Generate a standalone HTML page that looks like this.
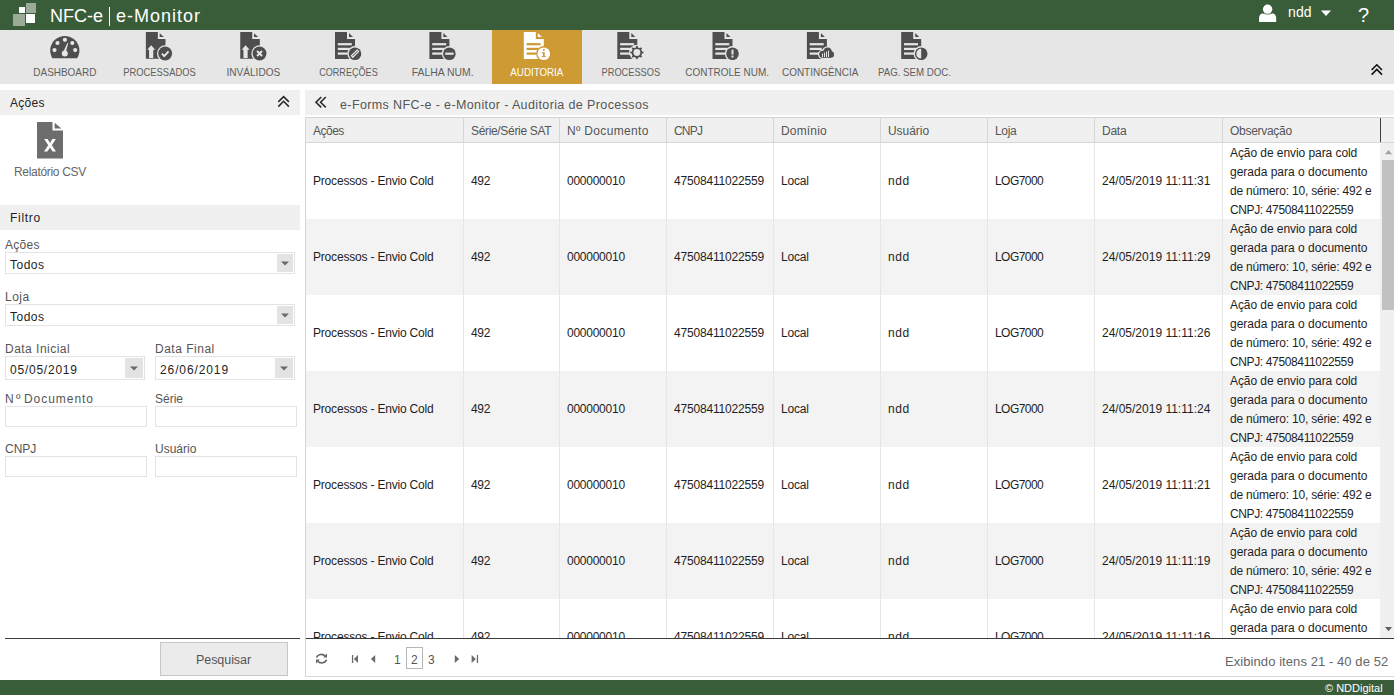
<!DOCTYPE html>
<html><head><meta charset="utf-8"><title>NFC-e | e-Monitor</title>
<style>
html,body{margin:0;padding:0;width:1394px;height:695px;overflow:hidden;background:#fff;}
body{position:relative;font-family:"Liberation Sans",sans-serif;}
.r{position:absolute;}
.t{position:absolute;white-space:pre;line-height:20px;font-size:12px;color:#1e1e1e;}
.tab{position:absolute;width:90px;text-align:center;white-space:pre;line-height:20px;font-size:11px;}
.clip{position:absolute;overflow:hidden;}
.obs{line-height:19px;}
.ov{position:absolute;left:0;top:0;pointer-events:none;}
</style></head><body>
<div class="r" style="left:0px;top:0px;width:1394px;height:30px;background:#3a5d39;"></div><div class="r" style="left:0px;top:30px;width:1394px;height:54px;background:#e6e6e6;"></div><div class="t" style="left:50px;top:6px;font-size:18px;color:#fff;">NFC-e</div><div class="r" style="left:108.8px;top:7px;width:1.5px;height:19px;background:#fff;"></div><div class="t" style="left:116px;top:6px;font-size:18px;color:#fff;letter-spacing:1.0px;">e-Monitor</div><div class="t" style="left:1288px;top:2px;font-size:14px;color:#fff;letter-spacing:0.15px;">ndd</div><div class="t" style="left:1358px;top:5px;font-size:20px;color:#fff;">?</div><div class="tab" style="left:20.00px;top:62px;color:#5e5e5e;"><span style="display:inline-block;transform:scaleX(0.904);">DASHBOARD</span></div><div class="tab" style="left:114.37px;top:62px;color:#5e5e5e;"><span style="display:inline-block;transform:scaleX(0.854);">PROCESSADOS</span></div><div class="tab" style="left:208.74px;top:62px;color:#5e5e5e;"><span style="display:inline-block;transform:scaleX(0.918);">INVÁLIDOS</span></div><div class="tab" style="left:303.11px;top:62px;color:#5e5e5e;"><span style="display:inline-block;transform:scaleX(0.826);">CORREÇÕES</span></div><div class="tab" style="left:397.48px;top:62px;color:#5e5e5e;"><span style="display:inline-block;transform:scaleX(0.948);">FALHA NUM.</span></div><div class="r" style="left:492px;top:30px;width:90px;height:54px;background:#cd9a33;"></div><div class="tab" style="left:491.85px;top:62px;color:#fff;"><span style="display:inline-block;transform:scaleX(0.888);">AUDITORIA</span></div><div class="tab" style="left:586.22px;top:62px;color:#5e5e5e;"><span style="display:inline-block;transform:scaleX(0.841);">PROCESSOS</span></div><div class="tab" style="left:680.59px;top:62px;color:#5e5e5e;"><span style="display:inline-block;transform:scaleX(0.907);">CONTROLE NUM.</span></div><div class="tab" style="left:774.96px;top:62px;color:#5e5e5e;"><span style="display:inline-block;transform:scaleX(0.906);">CONTINGÊNCIA</span></div><div class="tab" style="left:869.33px;top:62px;color:#5e5e5e;"><span style="display:inline-block;transform:scaleX(0.881);">PAG. SEM DOC.</span></div><div class="r" style="left:0px;top:90px;width:300px;height:25px;background:#f0f0f0;"></div><div class="t" style="left:10px;top:93px;font-size:12px;color:#222;letter-spacing:0.3px;">Ações</div><div class="t" style="left:14px;top:162px;font-size:12px;color:#666;letter-spacing:-0.317px;">Relatório CSV</div><div class="r" style="left:0px;top:205px;width:300px;height:25px;background:#f0f0f0;"></div><div class="t" style="left:10px;top:208px;font-size:12px;color:#222;letter-spacing:0.7px;">Filtro</div><div class="t" style="left:5px;top:235px;font-size:12px;color:#555;letter-spacing:0.3px;">Ações</div><div class="r" style="left:5px;top:252px;width:290px;height:22px;background:#fff;box-sizing:border-box;border:1px solid #e3e3e3;"></div><div class="r" style="left:277px;top:254px;width:16px;height:18px;background:#e3e3e3;"></div><div class="t" style="left:10px;top:255px;font-size:12px;letter-spacing:0.5px;">Todos</div><div class="t" style="left:5px;top:287px;font-size:12px;color:#555;letter-spacing:0.5px;">Loja</div><div class="r" style="left:5px;top:304px;width:290px;height:22px;background:#fff;box-sizing:border-box;border:1px solid #e3e3e3;"></div><div class="r" style="left:277px;top:306px;width:16px;height:18px;background:#e3e3e3;"></div><div class="t" style="left:10px;top:307px;font-size:12px;letter-spacing:0.5px;">Todos</div><div class="t" style="left:5px;top:339px;font-size:12px;color:#555;letter-spacing:0.477px;">Data Inicial</div><div class="t" style="left:155px;top:339px;font-size:12px;color:#555;letter-spacing:0.511px;">Data Final</div><div class="r" style="left:5px;top:356px;width:140px;height:24px;background:#fff;box-sizing:border-box;border:1px solid #e3e3e3;"></div><div class="r" style="left:125px;top:358px;width:18px;height:20px;background:#e3e3e3;"></div><div class="r" style="left:155px;top:356px;width:140px;height:24px;background:#fff;box-sizing:border-box;border:1px solid #e3e3e3;"></div><div class="r" style="left:275px;top:358px;width:18px;height:20px;background:#e3e3e3;"></div><div class="t" style="left:10px;top:360px;font-size:12px;letter-spacing:0.767px;">05/05/2019</div><div class="t" style="left:160px;top:360px;font-size:12px;letter-spacing:0.889px;">26/06/2019</div><div class="t" style="left:5px;top:389px;font-size:12px;color:#555;letter-spacing:2.4px;">Nº</div><div class="t" style="left:24px;top:389px;font-size:12px;color:#555;letter-spacing:0.95px;">Documento</div><div class="t" style="left:155px;top:389px;font-size:12px;color:#555;">Série</div><div class="r" style="left:5px;top:406px;width:142px;height:21px;background:#fff;box-sizing:border-box;border:1px solid #e3e3e3;"></div><div class="r" style="left:155px;top:406px;width:142px;height:21px;background:#fff;box-sizing:border-box;border:1px solid #e3e3e3;"></div><div class="t" style="left:5px;top:439px;font-size:12px;color:#555;">CNPJ</div><div class="t" style="left:155px;top:439px;font-size:12px;color:#555;">Usuário</div><div class="r" style="left:5px;top:456px;width:142px;height:21px;background:#fff;box-sizing:border-box;border:1px solid #e3e3e3;"></div><div class="r" style="left:155px;top:456px;width:142px;height:21px;background:#fff;box-sizing:border-box;border:1px solid #e3e3e3;"></div><div class="r" style="left:5px;top:638px;width:295px;height:1px;background:#3c3c3c;"></div><div class="r" style="left:160px;top:642px;width:128px;height:34px;background:#ebebeb;box-sizing:border-box;border:1px solid #c6c6c6;"></div><div class="t" style="left:196px;top:650px;font-size:12.5px;color:#555;letter-spacing:-0.06px;">Pesquisar</div><div class="r" style="left:305px;top:90px;width:1089px;height:25px;background:#f0f0f0;"></div><div class="t" style="left:340px;top:95px;font-size:12.5px;color:#555;letter-spacing:0.384px;">e-Forms NFC-e - e-Monitor - Auditoria de Processos</div><div class="r" style="left:305px;top:117px;width:1089px;height:1px;background:#d6d6d6;"></div><div class="r" style="left:305px;top:117px;width:1px;height:560px;background:#d6d6d6;"></div><div class="r" style="left:306px;top:118px;width:1088px;height:24px;background:#f0f0f0;"></div><div class="r" style="left:306px;top:142px;width:1088px;height:1px;background:#d6d6d6;"></div><div class="r" style="left:463px;top:118px;width:1px;height:24px;background:#d6d6d6;"></div><div class="r" style="left:559px;top:118px;width:1px;height:24px;background:#d6d6d6;"></div><div class="r" style="left:666px;top:118px;width:1px;height:24px;background:#d6d6d6;"></div><div class="r" style="left:773px;top:118px;width:1px;height:24px;background:#d6d6d6;"></div><div class="r" style="left:880px;top:118px;width:1px;height:24px;background:#d6d6d6;"></div><div class="r" style="left:987px;top:118px;width:1px;height:24px;background:#d6d6d6;"></div><div class="r" style="left:1094px;top:118px;width:1px;height:24px;background:#d6d6d6;"></div><div class="r" style="left:1222px;top:118px;width:1px;height:24px;background:#d6d6d6;"></div><div class="r" style="left:1380px;top:118px;width:1px;height:24px;background:#3e3e3e;"></div><div class="t" style="left:313px;top:121px;font-size:12px;color:#555;letter-spacing:-0.5px;">Ações</div><div class="t" style="left:471px;top:121px;font-size:12px;color:#555;letter-spacing:-0.329px;">Série/Série SAT</div><div class="t" style="left:567px;top:121px;font-size:12px;color:#555;letter-spacing:0.327px;">Nº Documento</div><div class="t" style="left:674px;top:121px;font-size:12px;color:#555;letter-spacing:-0.8px;">CNPJ</div><div class="t" style="left:781px;top:121px;font-size:12px;color:#555;letter-spacing:0.167px;">Domínio</div><div class="t" style="left:888px;top:121px;font-size:12px;color:#555;letter-spacing:-0.05px;">Usuário</div><div class="t" style="left:995px;top:121px;font-size:12px;color:#555;letter-spacing:-0.333px;">Loja</div><div class="t" style="left:1102px;top:121px;font-size:12px;color:#555;letter-spacing:-0.233px;">Data</div><div class="t" style="left:1230px;top:121px;font-size:12px;color:#555;letter-spacing:-0.289px;">Observação</div><div class="clip" style="left:306px;top:143px;width:1074px;height:495px;"><div class="r" style="left:0;top:0px;width:1074px;height:76px;background:#fff"></div><div class="r" style="left:157px;top:0px;width:1px;height:76px;background:#e6e6e6"></div><div class="r" style="left:253px;top:0px;width:1px;height:76px;background:#e6e6e6"></div><div class="r" style="left:360px;top:0px;width:1px;height:76px;background:#e6e6e6"></div><div class="r" style="left:467px;top:0px;width:1px;height:76px;background:#e6e6e6"></div><div class="r" style="left:574px;top:0px;width:1px;height:76px;background:#e6e6e6"></div><div class="r" style="left:681px;top:0px;width:1px;height:76px;background:#e6e6e6"></div><div class="r" style="left:788px;top:0px;width:1px;height:76px;background:#e6e6e6"></div><div class="r" style="left:916px;top:0px;width:1px;height:76px;background:#e6e6e6"></div><div class="t" style="left:7px;top:28px;letter-spacing:-0.19px">Processos - Envio Cold</div><div class="t" style="left:165px;top:28px;letter-spacing:-0.3px">492</div><div class="t" style="left:261px;top:28px;letter-spacing:-0.25px">000000010</div><div class="t" style="left:368px;top:28px;letter-spacing:-0.177px">47508411022559</div><div class="t" style="left:475px;top:28px;letter-spacing:-0.175px">Local</div><div class="t" style="left:582px;top:28px;letter-spacing:0.6px">ndd</div><div class="t" style="left:689px;top:28px;letter-spacing:-0.55px">LOG7000</div><div class="t" style="left:796px;top:28px;letter-spacing:0px">24/05/2019 11:11:31</div><div class="t obs" style="left:924px;top:1px;"><span style="letter-spacing:-0.068px">Ação de envio para cold</span><br><span style="letter-spacing:0px">gerada para o documento</span><br><span style="letter-spacing:-0.192px">de número: 10, série: 492 e</span><br><span style="letter-spacing:-0.368px">CNPJ: 47508411022559</span></div><div class="r" style="left:0;top:76px;width:1074px;height:76px;background:#f3f3f3"></div><div class="r" style="left:157px;top:76px;width:1px;height:76px;background:#e6e6e6"></div><div class="r" style="left:253px;top:76px;width:1px;height:76px;background:#e6e6e6"></div><div class="r" style="left:360px;top:76px;width:1px;height:76px;background:#e6e6e6"></div><div class="r" style="left:467px;top:76px;width:1px;height:76px;background:#e6e6e6"></div><div class="r" style="left:574px;top:76px;width:1px;height:76px;background:#e6e6e6"></div><div class="r" style="left:681px;top:76px;width:1px;height:76px;background:#e6e6e6"></div><div class="r" style="left:788px;top:76px;width:1px;height:76px;background:#e6e6e6"></div><div class="r" style="left:916px;top:76px;width:1px;height:76px;background:#e6e6e6"></div><div class="t" style="left:7px;top:104px;letter-spacing:-0.19px">Processos - Envio Cold</div><div class="t" style="left:165px;top:104px;letter-spacing:-0.3px">492</div><div class="t" style="left:261px;top:104px;letter-spacing:-0.25px">000000010</div><div class="t" style="left:368px;top:104px;letter-spacing:-0.177px">47508411022559</div><div class="t" style="left:475px;top:104px;letter-spacing:-0.175px">Local</div><div class="t" style="left:582px;top:104px;letter-spacing:0.6px">ndd</div><div class="t" style="left:689px;top:104px;letter-spacing:-0.55px">LOG7000</div><div class="t" style="left:796px;top:104px;letter-spacing:0px">24/05/2019 11:11:29</div><div class="t obs" style="left:924px;top:77px;"><span style="letter-spacing:-0.068px">Ação de envio para cold</span><br><span style="letter-spacing:0px">gerada para o documento</span><br><span style="letter-spacing:-0.192px">de número: 10, série: 492 e</span><br><span style="letter-spacing:-0.368px">CNPJ: 47508411022559</span></div><div class="r" style="left:0;top:152px;width:1074px;height:76px;background:#fff"></div><div class="r" style="left:157px;top:152px;width:1px;height:76px;background:#e6e6e6"></div><div class="r" style="left:253px;top:152px;width:1px;height:76px;background:#e6e6e6"></div><div class="r" style="left:360px;top:152px;width:1px;height:76px;background:#e6e6e6"></div><div class="r" style="left:467px;top:152px;width:1px;height:76px;background:#e6e6e6"></div><div class="r" style="left:574px;top:152px;width:1px;height:76px;background:#e6e6e6"></div><div class="r" style="left:681px;top:152px;width:1px;height:76px;background:#e6e6e6"></div><div class="r" style="left:788px;top:152px;width:1px;height:76px;background:#e6e6e6"></div><div class="r" style="left:916px;top:152px;width:1px;height:76px;background:#e6e6e6"></div><div class="t" style="left:7px;top:180px;letter-spacing:-0.19px">Processos - Envio Cold</div><div class="t" style="left:165px;top:180px;letter-spacing:-0.3px">492</div><div class="t" style="left:261px;top:180px;letter-spacing:-0.25px">000000010</div><div class="t" style="left:368px;top:180px;letter-spacing:-0.177px">47508411022559</div><div class="t" style="left:475px;top:180px;letter-spacing:-0.175px">Local</div><div class="t" style="left:582px;top:180px;letter-spacing:0.6px">ndd</div><div class="t" style="left:689px;top:180px;letter-spacing:-0.55px">LOG7000</div><div class="t" style="left:796px;top:180px;letter-spacing:0px">24/05/2019 11:11:26</div><div class="t obs" style="left:924px;top:153px;"><span style="letter-spacing:-0.068px">Ação de envio para cold</span><br><span style="letter-spacing:0px">gerada para o documento</span><br><span style="letter-spacing:-0.192px">de número: 10, série: 492 e</span><br><span style="letter-spacing:-0.368px">CNPJ: 47508411022559</span></div><div class="r" style="left:0;top:228px;width:1074px;height:76px;background:#f3f3f3"></div><div class="r" style="left:157px;top:228px;width:1px;height:76px;background:#e6e6e6"></div><div class="r" style="left:253px;top:228px;width:1px;height:76px;background:#e6e6e6"></div><div class="r" style="left:360px;top:228px;width:1px;height:76px;background:#e6e6e6"></div><div class="r" style="left:467px;top:228px;width:1px;height:76px;background:#e6e6e6"></div><div class="r" style="left:574px;top:228px;width:1px;height:76px;background:#e6e6e6"></div><div class="r" style="left:681px;top:228px;width:1px;height:76px;background:#e6e6e6"></div><div class="r" style="left:788px;top:228px;width:1px;height:76px;background:#e6e6e6"></div><div class="r" style="left:916px;top:228px;width:1px;height:76px;background:#e6e6e6"></div><div class="t" style="left:7px;top:256px;letter-spacing:-0.19px">Processos - Envio Cold</div><div class="t" style="left:165px;top:256px;letter-spacing:-0.3px">492</div><div class="t" style="left:261px;top:256px;letter-spacing:-0.25px">000000010</div><div class="t" style="left:368px;top:256px;letter-spacing:-0.177px">47508411022559</div><div class="t" style="left:475px;top:256px;letter-spacing:-0.175px">Local</div><div class="t" style="left:582px;top:256px;letter-spacing:0.6px">ndd</div><div class="t" style="left:689px;top:256px;letter-spacing:-0.55px">LOG7000</div><div class="t" style="left:796px;top:256px;letter-spacing:0px">24/05/2019 11:11:24</div><div class="t obs" style="left:924px;top:229px;"><span style="letter-spacing:-0.068px">Ação de envio para cold</span><br><span style="letter-spacing:0px">gerada para o documento</span><br><span style="letter-spacing:-0.192px">de número: 10, série: 492 e</span><br><span style="letter-spacing:-0.368px">CNPJ: 47508411022559</span></div><div class="r" style="left:0;top:304px;width:1074px;height:76px;background:#fff"></div><div class="r" style="left:157px;top:304px;width:1px;height:76px;background:#e6e6e6"></div><div class="r" style="left:253px;top:304px;width:1px;height:76px;background:#e6e6e6"></div><div class="r" style="left:360px;top:304px;width:1px;height:76px;background:#e6e6e6"></div><div class="r" style="left:467px;top:304px;width:1px;height:76px;background:#e6e6e6"></div><div class="r" style="left:574px;top:304px;width:1px;height:76px;background:#e6e6e6"></div><div class="r" style="left:681px;top:304px;width:1px;height:76px;background:#e6e6e6"></div><div class="r" style="left:788px;top:304px;width:1px;height:76px;background:#e6e6e6"></div><div class="r" style="left:916px;top:304px;width:1px;height:76px;background:#e6e6e6"></div><div class="t" style="left:7px;top:332px;letter-spacing:-0.19px">Processos - Envio Cold</div><div class="t" style="left:165px;top:332px;letter-spacing:-0.3px">492</div><div class="t" style="left:261px;top:332px;letter-spacing:-0.25px">000000010</div><div class="t" style="left:368px;top:332px;letter-spacing:-0.177px">47508411022559</div><div class="t" style="left:475px;top:332px;letter-spacing:-0.175px">Local</div><div class="t" style="left:582px;top:332px;letter-spacing:0.6px">ndd</div><div class="t" style="left:689px;top:332px;letter-spacing:-0.55px">LOG7000</div><div class="t" style="left:796px;top:332px;letter-spacing:0px">24/05/2019 11:11:21</div><div class="t obs" style="left:924px;top:305px;"><span style="letter-spacing:-0.068px">Ação de envio para cold</span><br><span style="letter-spacing:0px">gerada para o documento</span><br><span style="letter-spacing:-0.192px">de número: 10, série: 492 e</span><br><span style="letter-spacing:-0.368px">CNPJ: 47508411022559</span></div><div class="r" style="left:0;top:380px;width:1074px;height:76px;background:#f3f3f3"></div><div class="r" style="left:157px;top:380px;width:1px;height:76px;background:#e6e6e6"></div><div class="r" style="left:253px;top:380px;width:1px;height:76px;background:#e6e6e6"></div><div class="r" style="left:360px;top:380px;width:1px;height:76px;background:#e6e6e6"></div><div class="r" style="left:467px;top:380px;width:1px;height:76px;background:#e6e6e6"></div><div class="r" style="left:574px;top:380px;width:1px;height:76px;background:#e6e6e6"></div><div class="r" style="left:681px;top:380px;width:1px;height:76px;background:#e6e6e6"></div><div class="r" style="left:788px;top:380px;width:1px;height:76px;background:#e6e6e6"></div><div class="r" style="left:916px;top:380px;width:1px;height:76px;background:#e6e6e6"></div><div class="t" style="left:7px;top:408px;letter-spacing:-0.19px">Processos - Envio Cold</div><div class="t" style="left:165px;top:408px;letter-spacing:-0.3px">492</div><div class="t" style="left:261px;top:408px;letter-spacing:-0.25px">000000010</div><div class="t" style="left:368px;top:408px;letter-spacing:-0.177px">47508411022559</div><div class="t" style="left:475px;top:408px;letter-spacing:-0.175px">Local</div><div class="t" style="left:582px;top:408px;letter-spacing:0.6px">ndd</div><div class="t" style="left:689px;top:408px;letter-spacing:-0.55px">LOG7000</div><div class="t" style="left:796px;top:408px;letter-spacing:0px">24/05/2019 11:11:19</div><div class="t obs" style="left:924px;top:381px;"><span style="letter-spacing:-0.068px">Ação de envio para cold</span><br><span style="letter-spacing:0px">gerada para o documento</span><br><span style="letter-spacing:-0.192px">de número: 10, série: 492 e</span><br><span style="letter-spacing:-0.368px">CNPJ: 47508411022559</span></div><div class="r" style="left:0;top:456px;width:1074px;height:76px;background:#fff"></div><div class="r" style="left:157px;top:456px;width:1px;height:76px;background:#e6e6e6"></div><div class="r" style="left:253px;top:456px;width:1px;height:76px;background:#e6e6e6"></div><div class="r" style="left:360px;top:456px;width:1px;height:76px;background:#e6e6e6"></div><div class="r" style="left:467px;top:456px;width:1px;height:76px;background:#e6e6e6"></div><div class="r" style="left:574px;top:456px;width:1px;height:76px;background:#e6e6e6"></div><div class="r" style="left:681px;top:456px;width:1px;height:76px;background:#e6e6e6"></div><div class="r" style="left:788px;top:456px;width:1px;height:76px;background:#e6e6e6"></div><div class="r" style="left:916px;top:456px;width:1px;height:76px;background:#e6e6e6"></div><div class="t" style="left:7px;top:484px;letter-spacing:-0.19px">Processos - Envio Cold</div><div class="t" style="left:165px;top:484px;letter-spacing:-0.3px">492</div><div class="t" style="left:261px;top:484px;letter-spacing:-0.25px">000000010</div><div class="t" style="left:368px;top:484px;letter-spacing:-0.177px">47508411022559</div><div class="t" style="left:475px;top:484px;letter-spacing:-0.175px">Local</div><div class="t" style="left:582px;top:484px;letter-spacing:0.6px">ndd</div><div class="t" style="left:689px;top:484px;letter-spacing:-0.55px">LOG7000</div><div class="t" style="left:796px;top:484px;letter-spacing:0px">24/05/2019 11:11:16</div><div class="t obs" style="left:924px;top:457px;"><span style="letter-spacing:-0.068px">Ação de envio para cold</span><br><span style="letter-spacing:0px">gerada para o documento</span><br><span style="letter-spacing:-0.192px">de número: 10, série: 492 e</span><br><span style="letter-spacing:-0.368px">CNPJ: 47508411022559</span></div></div><div class="r" style="left:1380px;top:143px;width:14px;height:495px;background:#f0f0f0;"></div><div class="r" style="left:1382px;top:160px;width:12px;height:150px;background:#c1c1c1;"></div><div class="r" style="left:306px;top:638px;width:1088px;height:1px;background:#3c3c3c;"></div><div class="r" style="left:305px;top:676px;width:1089px;height:1px;background:#d6d6d6;"></div><div class="r" style="left:406px;top:647px;width:17px;height:22px;background:transparent;box-sizing:border-box;border:1px solid #b5b5b5;"></div><div class="t" style="left:394px;top:650px;font-size:12px;color:#555;">1</div><div class="t" style="left:411px;top:650px;font-size:12px;color:#555;">2</div><div class="t" style="left:428px;top:650px;font-size:12px;color:#555;">3</div><div class="t" style="left:1225px;top:652px;font-size:13px;color:#666;letter-spacing:0.074px;">Exibindo itens 21 - 40 de 52</div><div class="r" style="left:0px;top:680px;width:1394px;height:15px;background:#3a5d39;"></div><div class="t" style="left:1325px;top:678px;font-size:11px;color:#fff;">© NDDigital</div>
<svg class="ov" width="1394" height="695" viewBox="0 0 1394 695"><rect x="19" y="7" width="6" height="6" fill="#fff"/><rect x="26" y="3" width="10" height="10" fill="#9aab98" rx="0.5"/><rect x="13" y="14" width="12" height="12" fill="#9aab98" rx="0.5"/><rect x="26" y="14" width="9" height="9" fill="#fff"/><circle cx="1267.6" cy="9.3" r="4.7" fill="#fff"/><path d="M1259 22 V18.5 Q1259 13.2 1264.2 13.2 H1271 Q1276.2 13.2 1276.2 18.5 V22 Z" fill="#fff"/><path d="M1263.2 13.4 Q1267.6 15.2 1272 13.4" stroke="#3a5d39" stroke-width="0.7" fill="none"/><path d="M1321 10.5 H1331 L1326 16 Z" fill="#fff"/><path d="M52.4 58.3 A14.6 14.6 0 1 1 77.2 58.3 Z" fill="#4e4e4e"/><circle cx="64.9" cy="39.8" r="2.1" fill="#e6e6e6"/><circle cx="57.5" cy="43" r="2.1" fill="#e6e6e6"/><circle cx="72.3" cy="43" r="2.1" fill="#e6e6e6"/><circle cx="54.5" cy="50.1" r="2.1" fill="#e6e6e6"/><circle cx="75.2" cy="50.1" r="2.1" fill="#e6e6e6"/><path d="M67.3 43.0 L68.2 43.3 L66.1 51.2 L63.7 50.9 Z" fill="#e6e6e6"/><circle cx="64.8" cy="53.4" r="3.0" fill="#e6e6e6"/><path d="M145.87 32 H157.87 V39 H165.47 V58.8 H145.87 Z" fill="#4e4e4e"/><path d="M159.67000000000002 33.2 V36.9 H163.87 Z" fill="#4e4e4e"/><path d="M151.17000000000002 45.2 L155.27 49.8 H153.27 V57.9 H149.07 V49.8 H147.27 Z" fill="#e6e6e6"/><circle cx="165.17000000000002" cy="53.5" r="8.2" fill="#e6e6e6"/><circle cx="165.17000000000002" cy="53.5" r="6.9" fill="#4e4e4e"/><path d="M161.87 53.7 L164.27 56.1 L168.57000000000002 51.3" stroke="#e6e6e6" stroke-width="1.9" fill="none"/><path d="M240.24 32 H252.24 V39 H259.84000000000003 V58.8 H240.24 Z" fill="#4e4e4e"/><path d="M254.04000000000002 33.2 V36.9 H258.24 Z" fill="#4e4e4e"/><path d="M245.54000000000002 45.2 L249.64000000000001 49.8 H247.64000000000001 V57.9 H243.44 V49.8 H241.64000000000001 Z" fill="#e6e6e6"/><circle cx="259.54" cy="53.5" r="8.2" fill="#e6e6e6"/><circle cx="259.54" cy="53.5" r="6.9" fill="#4e4e4e"/><path d="M257.04 51.0 L262.04 56.0 M262.04 51.0 L257.04 56.0" stroke="#e6e6e6" stroke-width="1.9" fill="none"/><path d="M335.0 32 H347.0 V39 H355.0 V59 H335.0 Z" fill="#4e4e4e"/><path d="M349.0 33 V37 H353.0 Z" fill="#4e4e4e"/><rect x="337.8" y="43.1" width="14" height="2.2" fill="#e6e6e6"/><rect x="337.8" y="47.8" width="12" height="2.2" fill="#e6e6e6"/><rect x="337.8" y="52.5" width="10" height="2.2" fill="#e6e6e6"/><circle cx="355.0" cy="53.7" r="7.6" fill="#e6e6e6"/><circle cx="355.0" cy="53.7" r="6.3" fill="#4e4e4e"/><path d="M351.7 57.0 L358.3 50.400000000000006" stroke="#e6e6e6" stroke-width="3.2" fill="none"/><path d="M352.6 56.1 L357.6 51.1" stroke="#4e4e4e" stroke-width="1" fill="none"/><path d="M429.4 32 H441.4 V39 H449.4 V59 H429.4 Z" fill="#4e4e4e"/><path d="M443.4 33 V37 H447.4 Z" fill="#4e4e4e"/><rect x="432.2" y="43.1" width="14" height="2.2" fill="#e6e6e6"/><rect x="432.2" y="47.8" width="12" height="2.2" fill="#e6e6e6"/><rect x="432.2" y="52.5" width="10" height="2.2" fill="#e6e6e6"/><circle cx="449.4" cy="53.7" r="7.6" fill="#e6e6e6"/><circle cx="449.4" cy="53.7" r="6.3" fill="#4e4e4e"/><rect x="445.2" y="52.6" width="8.4" height="2.2" fill="#e6e6e6"/><path d="M523.8 32 H535.8 V39 H543.8 V59 H523.8 Z" fill="#fff"/><path d="M537.8 33 V37 H541.8 Z" fill="#fff"/><rect x="526.5999999999999" y="43.1" width="14" height="2.2" fill="#cd9a33"/><rect x="526.5999999999999" y="47.8" width="12" height="2.2" fill="#cd9a33"/><rect x="526.5999999999999" y="52.5" width="10" height="2.2" fill="#cd9a33"/><circle cx="543.8" cy="53.7" r="7.6" fill="#cd9a33"/><circle cx="543.8" cy="53.7" r="6.3" fill="#fff"/><rect x="542.9" y="52.2" width="1.8" height="4.6" fill="#cd9a33"/><rect x="541.8" y="52.2" width="1.5" height="1" fill="#cd9a33"/><rect x="541.8" y="56.1" width="4" height="1" fill="#cd9a33"/><circle cx="543.8" cy="50.1" r="1" fill="#cd9a33"/><path d="M617.3000000000001 32 H629.3000000000001 V39 H637.3000000000001 V59 H617.3000000000001 Z" fill="#4e4e4e"/><path d="M631.3000000000001 33 V37 H635.3000000000001 Z" fill="#4e4e4e"/><rect x="620.1" y="43.1" width="14" height="2.2" fill="#e6e6e6"/><rect x="620.1" y="47.8" width="12" height="2.2" fill="#e6e6e6"/><rect x="620.1" y="52.5" width="10" height="2.2" fill="#e6e6e6"/><circle cx="636.9000000000001" cy="52.5" r="7.8" fill="#e6e6e6"/><rect x="636.0500000000001" y="45.9" width="1.7" height="2.6" fill="#4e4e4e" transform="rotate(0 636.9000000000001 52.5)"/><rect x="636.0500000000001" y="45.9" width="1.7" height="2.6" fill="#4e4e4e" transform="rotate(45 636.9000000000001 52.5)"/><rect x="636.0500000000001" y="45.9" width="1.7" height="2.6" fill="#4e4e4e" transform="rotate(90 636.9000000000001 52.5)"/><rect x="636.0500000000001" y="45.9" width="1.7" height="2.6" fill="#4e4e4e" transform="rotate(135 636.9000000000001 52.5)"/><rect x="636.0500000000001" y="45.9" width="1.7" height="2.6" fill="#4e4e4e" transform="rotate(180 636.9000000000001 52.5)"/><rect x="636.0500000000001" y="45.9" width="1.7" height="2.6" fill="#4e4e4e" transform="rotate(225 636.9000000000001 52.5)"/><rect x="636.0500000000001" y="45.9" width="1.7" height="2.6" fill="#4e4e4e" transform="rotate(270 636.9000000000001 52.5)"/><rect x="636.0500000000001" y="45.9" width="1.7" height="2.6" fill="#4e4e4e" transform="rotate(315 636.9000000000001 52.5)"/><circle cx="636.9000000000001" cy="52.5" r="4.35" fill="#e6e6e6" stroke="#4e4e4e" stroke-width="1.8"/><path d="M712.5 32 H724.5 V39 H732.5 V59 H712.5 Z" fill="#4e4e4e"/><path d="M726.5 33 V37 H730.5 Z" fill="#4e4e4e"/><rect x="715.3" y="43.1" width="14" height="2.2" fill="#e6e6e6"/><rect x="715.3" y="47.8" width="12" height="2.2" fill="#e6e6e6"/><rect x="715.3" y="52.5" width="10" height="2.2" fill="#e6e6e6"/><circle cx="732.5" cy="53.7" r="7.6" fill="#e6e6e6"/><circle cx="732.5" cy="53.7" r="6.3" fill="#4e4e4e"/><rect x="731.5" y="49.7" width="2" height="4.8" fill="#e6e6e6"/><rect x="731.5" y="55.5" width="2" height="2" fill="#e6e6e6"/><path d="M806.9 32 H818.9 V39 H826.9 V59 H806.9 Z" fill="#4e4e4e"/><path d="M820.9 33 V37 H824.9 Z" fill="#4e4e4e"/><rect x="809.6999999999999" y="43.1" width="14" height="2.2" fill="#e6e6e6"/><rect x="809.6999999999999" y="47.8" width="12" height="2.2" fill="#e6e6e6"/><rect x="809.6999999999999" y="52.5" width="10" height="2.2" fill="#e6e6e6"/><circle cx="822.7" cy="54.3" r="4.8" fill="#e6e6e6"/><circle cx="827.6" cy="51.8" r="5.6" fill="#e6e6e6"/><circle cx="830.8" cy="54.5" r="4.5" fill="#e6e6e6"/><rect x="822.7" y="52.5" width="8.1" height="6.6" fill="#e6e6e6"/><circle cx="822.7" cy="54.3" r="3.5" fill="#4e4e4e"/><circle cx="827.6" cy="51.8" r="4.3" fill="#4e4e4e"/><circle cx="830.8" cy="54.5" r="3.2" fill="#4e4e4e"/><rect x="822.7" y="54" width="8.1" height="3.8" fill="#4e4e4e"/><rect x="822" y="53.5" width="1" height="3.5" fill="#e6e6e6"/><rect x="824" y="52.6" width="1" height="4.399999999999999" fill="#e6e6e6"/><rect x="826" y="51.6" width="1" height="5.399999999999999" fill="#e6e6e6"/><rect x="828" y="50.6" width="1" height="6.399999999999999" fill="#e6e6e6"/><path d="M901.2 32 H913.2 V39 H921.2 V59 H901.2 Z" fill="#4e4e4e"/><path d="M915.2 33 V37 H919.2 Z" fill="#4e4e4e"/><rect x="904.0" y="43.1" width="14" height="2.2" fill="#e6e6e6"/><rect x="904.0" y="47.8" width="12" height="2.2" fill="#e6e6e6"/><rect x="904.0" y="52.5" width="10" height="2.2" fill="#e6e6e6"/><circle cx="921.2" cy="53.7" r="7.6" fill="#e6e6e6"/><circle cx="921.2" cy="53.7" r="5.6" fill="#e6e6e6" stroke="#4e4e4e" stroke-width="1.4"/><path d="M921.2 48.1 A5.6 5.6 0 0 1 921.2 59.300000000000004 Z" fill="#4e4e4e"/><path d="M1371.6 70 L1376.8 64.8 L1382 70 M1371.6 74.6 L1376.8 69.4 L1382 74.6" stroke="#111" stroke-width="1.6" fill="none"/><path d="M278.3 101.9 L283.6 96.6 L288.9 101.9 M278.3 106.6 L283.6 101.3 L288.9 106.6" stroke="#2a2a2a" stroke-width="1.6" fill="none"/><path d="M37 122 H52.5 V130.5 H63 V158.4 H37 Z" fill="#6d6d6d"/><path d="M54.6 122.8 V128.6 H61.4 Z" fill="#6d6d6d"/><path d="M44.2 139 H47.6 L50 143 L52.4 139 H55.8 L51.8 145.2 L56 151.6 H52.6 L50 147.4 L47.4 151.6 H44 L48.2 145.2 Z" fill="#fff"/><path d="M281 261.5 H289 L285 265.5 Z" fill="#6a6a6a"/><path d="M281 313.5 H289 L285 317.5 Z" fill="#6a6a6a"/><path d="M130 366.5 H138 L134 370.5 Z" fill="#6a6a6a"/><path d="M280 366.5 H288 L284 370.5 Z" fill="#6a6a6a"/><path d="M321.2 97 L316 102.2 L321.2 107.4 M325.8 97 L320.6 102.2 L325.8 107.4" stroke="#2a2a2a" stroke-width="1.6" fill="none"/><path d="M1385 154.2 L1388.5 150 L1392 154.2 Z" fill="#a3a3a3"/><path d="M1385 627 H1392 L1388.5 631.2 Z" fill="#606060"/><path d="M316.5 657.5 A5 4.6 0 0 1 325.3 656.3" stroke="#666" stroke-width="1.6" fill="none"/><path d="M323.2 657.6 H327 V653.6 Z" fill="#666"/><path d="M326.5 659.7 A5 4.6 0 0 1 317.7 660.9" stroke="#666" stroke-width="1.6" fill="none"/><path d="M319.8 659.5 H316 V663.5 Z" fill="#666"/><rect x="351.9" y="655" width="1.3" height="8" fill="#6a6a6a"/><path d="M358 655 V663 L353.9 659 Z" fill="#6a6a6a"/><path d="M375.2 655 V663 L370.9 659 Z" fill="#6a6a6a"/><path d="M454.8 655 V663 L459.2 659 Z" fill="#6a6a6a"/><path d="M471.6 655 V663 L475.8 659 Z" fill="#6a6a6a"/><rect x="476.8" y="655" width="1.3" height="8" fill="#6a6a6a"/></svg>
</body></html>
